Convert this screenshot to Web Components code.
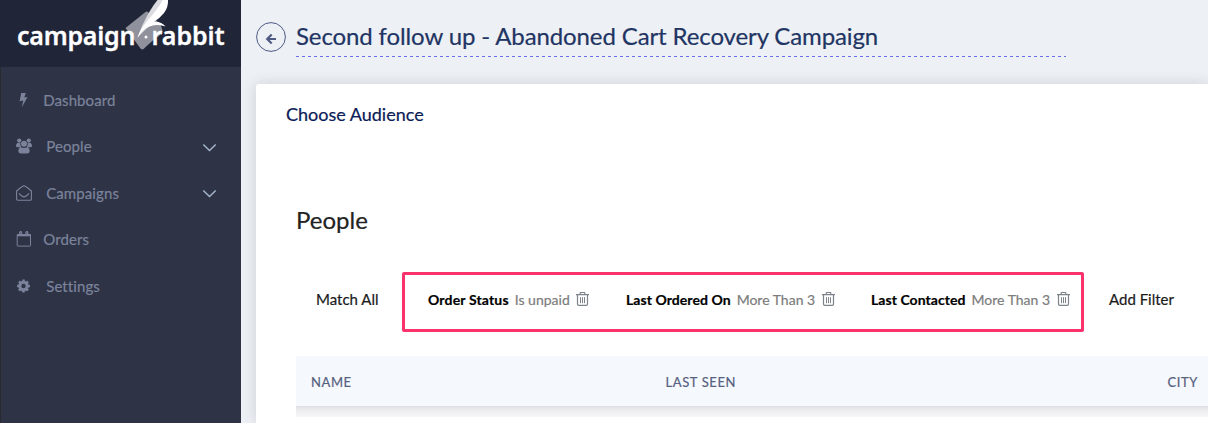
<!DOCTYPE html>
<html lang="en">
<head>
<meta charset="utf-8">
<title>Campaign Rabbit</title>
<style>
html, body { margin: 0; height: 100%; overflow: hidden; }
body { font-family: Lato, "Liberation Sans", sans-serif; background: #edf0f4; -webkit-text-stroke: .2px; }
</style>
</head>
<body>
<campaign-app></campaign-app>
<script>
const define = (name, html) => customElements.define(name, class extends HTMLElement {
  constructor() {
    super();
    const t = document.createElement('template');
    t.innerHTML = html;
    this.attachShadow({ mode: 'open' }).appendChild(t.content.cloneNode(true));
  }
});

const ICONS = {
  bolt: '<svg width="16" height="16" viewBox="0 0 16 16"><path fill="currentColor" d="M5.200 1h4.600L8.300 5.500l3.200-.6L5.900 15.200l1.300-6.700-3.600.8z"/></svg>',
  users: '<svg width="16" height="16" viewBox="0 0 16 16"><g fill="currentColor"><circle cx="3.2" cy="2.6" r="2.1"/><circle cx="12.8" cy="2.6" r="2.1"/><path d="M1.5 5h3C4 7 4.600 8.300 5.500 9.200H1.600Q0 9.200 0 7.700 0 5.800 1.500 5zM14.500 5h-3c.5 2-.1 3.300-1 4.200h3.900Q16 9.200 16 7.700 16 5.800 14.500 5z"/><circle cx="8" cy="5.800" r="3"/><path d="M4.500 9Q8 10.800 11.500 9 13.700 9.800 13.700 13 13.700 15.400 11.500 15.400h-7Q2.300 15.400 2.300 13 2.300 9.800 4.500 9z"/></g></svg>',
  mail: '<svg width="16" height="16" viewBox="0 0 16 16" fill="none" stroke="currentColor" stroke-width="1.100" stroke-linejoin="round"><path d="M.6 6Q4.500 2.200 7.200.9q.8-.4 1.600 0Q11.500 2.200 15.400 6v8q0 1.300-1.300 1.300H1.900Q.6 15.300.6 14z"/><path d="M3 8.500Q6.500 11.900 8 11.900T13 8.500"/></svg>',
  calendar: '<svg width="16" height="16" viewBox="0 0 16 16" fill="none" stroke="currentColor"><path d="M1.200 3.600h13.300v10.900q0 .6-.6.6H1.800q-.6 0-.6-.6z"/><path stroke-width="2.200" d="M1.200 4.200h13.300"/><path stroke-width="1.300" d="M3.700 4V1.500q0-.8.9-.8t.9.800V4M9.900 4V1.500q0-.8.9-.8t.9.800V4"/></svg>',
  gear: '<svg width="16" height="16" viewBox="0 0 16 16"><circle cx="7.500" cy="8" r="3.700" fill="none" stroke="currentColor" stroke-width="3"/><g stroke="currentColor" stroke-width="2.600"><path d="M7.500 1.600v2M7.500 12.400v2M1.100 8h2M11.900 8h2M3 3.500l1.400 1.400M10.600 11.100l1.400 1.400M3 12.500l1.400-1.400M10.600 4.900l1.400-1.400"/></g></svg>'
};

define('brand-logo', `
<style>
:host { display: flex; position: relative; height: 67px; box-sizing: border-box; background: #202638; color: #fff; padding: 17px 0 0 17px; font: 600 25px/36px "Noto Sans", sans-serif; -webkit-text-stroke: .3px; }
.mark { position: absolute; left: 0; top: 0; }
span { position: relative; white-space: nowrap; }
.a { width: 134.500px; letter-spacing: -.25px; }
.b { letter-spacing: -.05px; }
</style>
<svg class="mark" width="241" height="67" viewBox="0 0 241 67">
<path fill="#8f929c" d="M125.500 28L145.500 12Q147 11 148.500 12.500L158 22Q163 27 162 32 160 36 155.500 38L143.500 49Q142 50 140.500 48.500z"/>
<path fill="#dcdce0" d="M157.500 0h5.500L149 26 137.500 37.500 142 26Q150 9 157.500 0z"/>
<path fill="#fff" d="M162.500 0H168Q168.500 7 164 13 160 18 154 21.800 161.500 21.300 165.500 26.500 160 24.300 154 25.300 143 27.500 137.500 38 139 31 148 20 158 9 162.500 0z"/>
<circle cx="146" cy="37" r="1.500" fill="#fff"/>
</svg>
<span class="a">campaign</span><span class="b">rabbit</span>`);

customElements.define('nav-item', class extends HTMLElement {
  connectedCallback() {
    const gap = this.getAttribute('gap') || '14.700';
    this.attachShadow({ mode: 'open' }).innerHTML = `
<style>
:host { display: flex; align-items: center; height: 46.5px; padding: 0 24px 0 15.5px; color: #7b839b; font-size: 15px; line-height: 20px; }
.icon { display: flex; width: 16px; margin-right: ${gap}px; }
.label { flex: 1; letter-spacing: .1px; }
.chev { color: #a3b4cb; display: block; position: relative; top: 1px; }
</style>
<span class="icon">${ICONS[this.getAttribute('icon')]}</span><span class="label"><slot></slot></span>
${this.hasAttribute('expandable') ? '<svg class="chev" width="15" height="9" viewBox="0 0 15 9" fill="none" stroke="currentColor" stroke-width="1.500"><path d="M1.300 1.500l6.200 6 6.200-6"/></svg>' : ''}`;
  }
});

define('side-bar', `
<style>
:host { display: block; width: 241px; flex: none; background: #2e3346; box-sizing: border-box; box-shadow: inset 1px 0 #292a30; }
nav { padding-top: 9.600px; }
</style>
<brand-logo></brand-logo>
<nav>
<nav-item icon="bolt" gap="11.700">Dashboard</nav-item>
<nav-item icon="users" expandable>People</nav-item>
<nav-item icon="mail" expandable>Campaigns</nav-item>
<nav-item icon="calendar" gap="11.700">Orders</nav-item>
<nav-item icon="gear">Settings</nav-item>
</nav>`);

define('page-title', `
<style>
:host { display: flex; height: 84px; padding-left: 15px; box-sizing: border-box; align-items: flex-start; }
svg { margin: 22px 9px 0 0; flex: none; }
.t { width: 770px; height: 57px; box-sizing: border-box; padding-top: 21px; line-height: 30px; font-size: 24px; letter-spacing: -.12px; color: #1f3563; white-space: nowrap;
 background: repeating-linear-gradient(90deg, #6a6fe8 0 3px, transparent 3px 6px) 0 100% / 100% 1px no-repeat; }
</style>
<svg width="31" height="31" viewBox="0 0 31 31" fill="none" stroke="#4f5a85"><circle cx="15" cy="15" r="14.400"/><path stroke-width="2.200" d="M20 17h-8M15.700 12.500L11.200 17l4.500 4.500"/></svg>
<div class="t"><slot></slot></div>`);

define('filter-chip', `
<style>
:host { display: flex; align-items: center; height: 20px; font-size: 14px; color: #7c7c7c; white-space: nowrap; }
b { color: #000; font-weight: 700; margin-right: 6px; letter-spacing: var(--field-spacing, .06px); }
svg { margin-left: 6.600px; flex: none; }
</style>
<b><slot name="field"></slot></b><slot></slot>
<svg width="13" height="14" viewBox="0 0 13 14" fill="none" stroke="#7d838a"><path stroke-width="1.200" d="M0 2.700h13M4.200 2.500V1.200q0-.7.7-.7h3.200q.7 0 .7.700v1.300M1.500 3v9q0 1.400 1.400 1.400h7.200q1.400 0 1.400-1.400V3"/><path d="M4.500 5.200v6M6.500 5.200v6M8.500 5.200v6"/></svg>`);

define('filter-bar', `
<style>
:host { display: flex; align-items: center; margin: 37px 0 0 20px; height: 60px; font-size: 15px; color: #1a1a1a; white-space: nowrap; }
.m { width: 86px; margin-top: -6px; }
.box { box-sizing: border-box; width: 682px; height: 60px; border: 3px solid #fb336c; border-radius: 2px; display: flex; align-items: flex-start; padding: 14px 0 0 23px; margin-right: 25px; }
.c1 { width: 198px; --field-spacing: .16px; } .c2 { width: 245px; }
</style>
<span class="m">Match All</span>
<div class="box">
<filter-chip class="c1"><span slot="field">Order Status</span>Is unpaid</filter-chip>
<filter-chip class="c2"><span slot="field">Last Ordered On</span>More Than 3</filter-chip>
<filter-chip><span slot="field">Last Contacted</span>More Than 3</filter-chip>
</div>
<span class="m">Add Filter</span>`);

define('people-table', `
<style>
:host { display: block; margin-top: 24px; position: relative; }
.h { display: grid; grid-template-columns: 354.500px 502px 1fr; align-items: center; height: 50px; padding: 1px 0 0 15px; box-sizing: border-box; background: #f5f8fc; color: #56607f; font-size: 13px; letter-spacing: .6px; }
.s { height: 11px; background: linear-gradient(#dcdde4, #ebebee 30%, #f8f8f9); }
</style>
<div class="h"><span>NAME</span><span>LAST SEEN</span><span>CITY</span></div><div class="s"></div>`);

define('audience-card', `
<style>
:host { display: block; margin-left: 15px; height: 339px; box-sizing: border-box; background: #fff; border-radius: 3px 0 0 0; padding: 18px 0 0 30px; box-shadow: 0 0 14px rgba(60,70,100,.18); }
h2 { margin: 0; font: 400 18px/24px Lato, sans-serif; color: #0b1b57; }
section { margin: 79px 0 0 10px; }
h3 { margin: 0; font: 400 24px/30px Lato, sans-serif; color: #222; }
</style>
<h2>Choose Audience</h2>
<section><h3>People</h3><filter-bar></filter-bar><people-table></people-table></section>`);

define('campaign-app', `
<style>
:host { display: flex; height: 423px; width: 1208px; overflow: hidden; }
main { flex: 1; min-width: 0; background: #edf0f4; overflow: hidden; }
</style>
<side-bar></side-bar>
<main><page-title>Second follow up - Abandoned Cart Recovery Campaign</page-title><audience-card></audience-card></main>`);
</script>
</body>
</html>
